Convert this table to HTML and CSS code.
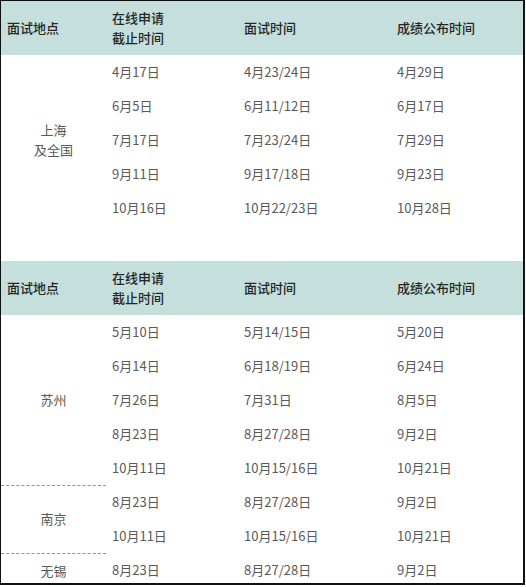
FILE: index.html
```html
<!DOCTYPE html>
<html lang="zh-CN">
<head>
<meta charset="utf-8">
<link rel="stylesheet" href="styles.css">
</head>
<body>
<div class="frame">
  <table class="schedule">
    <colgroup>
      <col class="c-loc"><col class="c-apply"><col class="c-exam"><col class="c-result">
    </colgroup>
    <tbody>
      <tr class="head">
        <th>面试地点</th><th>在线申请<br>截止时间</th><th>面试时间</th><th>成绩公布时间</th>
      </tr>
      <tr><td class="loc" rowspan="5">上海<br>及全国</td><td>4月17日</td><td>4月23/24日</td><td>4月29日</td></tr>
      <tr><td>6月5日</td><td>6月11/12日</td><td>6月17日</td></tr>
      <tr><td>7月17日</td><td>7月23/24日</td><td>7月29日</td></tr>
      <tr><td>9月11日</td><td>9月17/18日</td><td>9月23日</td></tr>
      <tr><td>10月16日</td><td>10月22/23日</td><td>10月28日</td></tr>
      <tr class="spacer"><td colspan="4"></td></tr>
      <tr class="head">
        <th>面试地点</th><th>在线申请<br>截止时间</th><th>面试时间</th><th>成绩公布时间</th>
      </tr>
      <tr><td class="loc sep" rowspan="5">苏州</td><td>5月10日</td><td>5月14/15日</td><td>5月20日</td></tr>
      <tr><td>6月14日</td><td>6月18/19日</td><td>6月24日</td></tr>
      <tr><td>7月26日</td><td>7月31日</td><td>8月5日</td></tr>
      <tr><td>8月23日</td><td>8月27/28日</td><td>9月2日</td></tr>
      <tr><td>10月11日</td><td>10月15/16日</td><td>10月21日</td></tr>
      <tr><td class="loc sep" rowspan="2">南京</td><td>8月23日</td><td>8月27/28日</td><td>9月2日</td></tr>
      <tr><td>10月11日</td><td>10月15/16日</td><td>10月21日</td></tr>
      <tr><td class="loc">无锡</td><td>8月23日</td><td>8月27/28日</td><td>9月2日</td></tr>
    </tbody>
  </table>
</div>
</body>
</html>
```

FILE: styles.css
```css
html, body {
  margin: 0;
  padding: 0;
  background: #fff;
}

.frame {
  box-sizing: border-box;
  width: 525px;
  height: 585px;
  border-top: 1px solid #111;
  border-left: 1px solid #111;
  border-right: 2px solid #111;
  border-bottom: 2px solid #111;
  overflow: hidden;
  font-family: "Noto Sans CJK SC", "Noto Sans", sans-serif;
  font-size: 13px;
}

.schedule {
  width: 522px;
  border-collapse: collapse;
  table-layout: fixed;
}

.c-loc { width: 105px; }
.c-apply { width: 132px; }
.c-exam { width: 153px; }
.c-result { width: 132px; }

.schedule th,
.schedule td {
  padding: 7px 6px;
  line-height: 20px;
  text-align: left;
  vertical-align: middle;
  white-space: nowrap;
}

.head th {
  background: #c5e0dc;
  color: #262626;
  font-weight: 500;
}

.schedule td {
  color: #595959;
  font-weight: 400;
}

.schedule td.loc {
  text-align: center;
}

.schedule td.sep {
  border-bottom: 1px dashed #2dbfa9;
}

.spacer td {
  height: 22px;
}
```
